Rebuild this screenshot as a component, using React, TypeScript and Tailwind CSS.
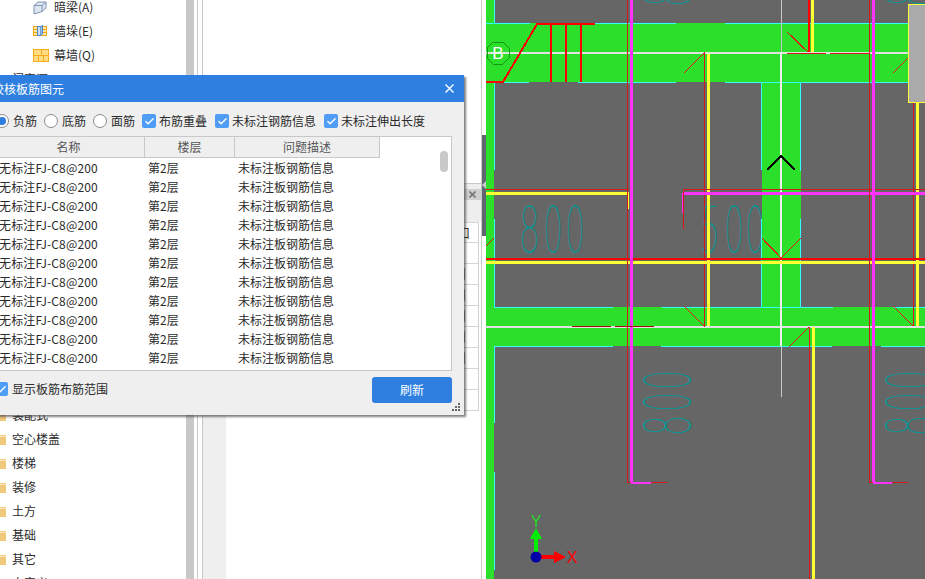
import { Check } from 'lucide-react'

const FONT = "font-['Noto_Sans_CJK_SC','Noto_Sans',sans-serif]"

type Seg = [number, number, number, number, string, number]

const GREEN = '#2bdf2b'
const CYAN = '#33ffff'
const RED = '#d81818'
const BRIGHT = '#ff0000'
const DARK = '#a80808'
const YEL = '#ffff33'
const MAG = '#ff33ff'
const WHITE = '#e2e2e2'
const TEAL = '#009a9a'

const cadLines: Seg[] = [
  // cyan edges
  [494, 0, 494, 23, CYAN, 1],
  [494, 83, 494, 170, CYAN, 1],
  [494, 219, 494, 307, CYAN, 1],
  [494, 347, 494, 423, CYAN, 1],
  [494, 472, 494, 570, CYAN, 1],
  [486, 23.5, 530, 23.5, CYAN, 1],
  [595, 23.5, 676, 23.5, CYAN, 1],
  [725, 23.5, 908, 23.5, CYAN, 1],
  [504, 82.5, 529, 82.5, CYAN, 1],
  [578, 82.5, 676, 82.5, CYAN, 1],
  [725, 82.5, 908, 82.5, CYAN, 1],
  [761.5, 82, 761.5, 170, CYAN, 1],
  [800.5, 82, 800.5, 171, CYAN, 1],
  [761.5, 219, 761.5, 307, CYAN, 1],
  [800.5, 219, 800.5, 307, CYAN, 1],
  [494, 307.5, 613, 307.5, CYAN, 1],
  [662, 307.5, 833, 307.5, CYAN, 1],
  [893, 307.5, 925, 307.5, CYAN, 1],
  [494, 346.5, 613, 346.5, CYAN, 1],
  [661, 346.5, 832, 346.5, CYAN, 1],
  [881, 346.5, 925, 346.5, CYAN, 1],
  // axis lines
  [486, 52.5, 908, 52.5, WHITE, 2],
  [486, 326.5, 925, 326.5, WHITE, 2],
  [781.5, 0, 781.5, 52, '#c8c8c8', 1],
  [781, 52, 781, 346, '#eeeeee', 2],
  [781.5, 346, 781.5, 397, '#c8c8c8', 1],
  // vertical rebar
  [708.5, 54, 708.5, 326, YEL, 3],
  [704.5, 52, 704.5, 327, RED, 1],
  [812.5, 0, 812.5, 52, YEL, 3],
  [808.5, 0, 808.5, 52, BRIGHT, 2],
  [813.5, 327, 813.5, 579, YEL, 3],
  [809.5, 327, 809.5, 579, RED, 1],
  [917.5, 102, 917.5, 326, YEL, 3],
  [913.5, 52, 913.5, 326, RED, 1],
  // horizontal rebar
  [486, 262.5, 925, 262.5, YEL, 3],
  [486, 259, 925, 259, BRIGHT, 2],
  [486, 193.5, 629, 193.5, YEL, 3],
  [486, 189.5, 629, 189.5, RED, 1],
  [628.5, 193, 628.5, 209, YEL, 1],
  [684, 193.5, 925, 193.5, MAG, 3],
  [683, 189.5, 925, 189.5, RED, 1],
  [682.5, 193, 682.5, 213, MAG, 2],
  [683.5, 189, 683.5, 229, RED, 1],
  [631, 0, 631, 482, MAG, 3],
  [627.5, 0, 627.5, 482, RED, 1],
  [627, 482.5, 667, 482.5, RED, 1],
  [631, 482.5, 651, 482.5, MAG, 2],
  [873, 0, 873, 482, MAG, 3],
  [869.5, 0, 869.5, 482, RED, 1],
  [869, 482.5, 908, 482.5, RED, 1],
  [873, 482.5, 892, 482.5, MAG, 2],
  // short spans on the axes
  [787, 53, 826, 53, RED, 1],
  [830, 53, 870, 53, RED, 1],
  [572, 326, 611, 326, DARK, 1],
  [615, 326, 654, 326, DARK, 1],
  // stair lines
  [551, 24, 551, 82, BRIGHT, 2],
  [566, 24, 566, 82, BRIGHT, 2],
  [581, 24, 581, 82, BRIGHT, 2],
]

const diagonals: [number, number, number, number][] = [
  [684, 73, 704, 53],
  [684, 306, 704, 326],
  [787, 32, 808, 52],
  [789, 347, 809, 327],
  [893, 73, 913, 53],
  [893, 306, 913, 326],
  [762, 238, 781, 258],
  [781, 258, 801, 238],
  [486, 246, 494, 238],
]

// dimension labels on the plan: [digit, offset along the baseline, length]
const LABEL_800: [string, number, number][] = [
  ['8', 0, 19],
  ['0', 25, 16],
  ['0', 47, 16],
]
const LABEL_500: [string, number, number][] = [
  ['5', 0, 19],
  ['0', 26, 16],
  ['0', 47, 16],
]

const Digits = ({
  x,
  y,
  rotate,
  digits,
}: {
  x: number
  y: number
  rotate?: boolean
  digits: [string, number, number][]
}) => (
  <g transform={`translate(${x} ${y})${rotate ? ' rotate(-90)' : ''}`}>
    {digits.map(([d, off, len], i) => (
      <text
        key={i}
        x={off}
        y={0}
        fontSize="65"
        fontWeight="100"
        textLength={len}
        lengthAdjust="spacingAndGlyphs"
        fill={TEAL}
        stroke={TEAL}
        strokeWidth="0.7"
        fontFamily="Lato, Roboto, sans-serif"
      >
        {d}
      </text>
    ))}
  </g>
)

const CadCanvas = () => (
  <svg viewBox="486 0 439 579" className="h-[579px] w-[439px] shrink-0 bg-[#666666]" shapeRendering="crispEdges">
    <rect x="486" y="0" width="8" height="579" fill={GREEN} />
    <rect x="486" y="23" width="422" height="59" fill={GREEN} />
    <rect x="762" y="82" width="39" height="225" fill={GREEN} />
    <rect x="486" y="307" width="439" height="39" fill={GREEN} />
    <Digits x={520} y={252} digits={LABEL_800} />
    <Digits x={700} y={252} digits={LABEL_500} />
    <Digits x={690} y={435} rotate digits={LABEL_800} />
    <Digits x={932} y={435} rotate digits={LABEL_800} />
    <Digits x={690} y={6} rotate digits={LABEL_800} />
    <Digits x={932} y={6} rotate digits={LABEL_800} />
    {cadLines.map(([x1, y1, x2, y2, stroke, w], i) => (
      <line key={i} x1={x1} y1={y1} x2={x2} y2={y2} stroke={stroke} strokeWidth={w} />
    ))}
    {diagonals.map(([x1, y1, x2, y2], i) => (
      <line key={i} x1={x1} y1={y1} x2={x2} y2={y2} stroke="#e81414" strokeWidth="1.2" />
    ))}
    <polyline points="486,82 503,82 537,24 595,24" fill="none" stroke={BRIGHT} strokeWidth="2" />
    <polyline points="767,170 781,156 795,170" fill="none" stroke="#000000" strokeWidth="2" />
    <rect x="908.5" y="4.5" width="20" height="98" fill="#aaaaaa" stroke={YEL} strokeWidth="1.5" />

    <polygon
      points="493,42 503,42 509,48 509,58 503,64 493,64 487,58 487,48"
      fill="none"
      stroke="#129a12"
      strokeWidth="1"
    />
    <text x="498" y="59" textAnchor="middle" fontSize="17" fill="#ffffff" fontFamily="Liberation Sans, sans-serif">
      B
    </text>

    {/* axis gizmo */}
    <rect x="534" y="538" width="4" height="15" fill="#00ee00" />
    <polygon points="536,528 542,539 530,539" fill="#00ee00" />
    <rect x="540" y="555" width="15" height="4" fill="#ff0000" />
    <polygon points="554,551 566,557 554,563" fill="#ff0000" />
    <circle cx="536" cy="557" r="5.5" fill="#0000a8" shapeRendering="auto" />
    <text x="536" y="527" textAnchor="middle" fontSize="16" fill="#22dd22" fontFamily="Liberation Sans, sans-serif">
      Y
    </text>
    <text x="572" y="563" textAnchor="middle" fontSize="16" fill="#ff0000" fontFamily="Liberation Sans, sans-serif">
      X
    </text>
  </svg>
)

const BeamIcon = () => (
  <svg width="14" height="15" viewBox="0 0 14 15" fill="none" className="shrink-0">
    <path d="M1 5.5 L5 2 H13 V8 L9 11.5 L1 14 Z" fill="#dfe6f0" stroke="#7f93b5" />
    <path d="M1 5.5 H9 V11.5 M9 5.5 L13 2" stroke="#7f93b5" />
  </svg>
)

const PierIcon = () => (
  <svg width="14" height="12" viewBox="0 0 14 12" className="shrink-0">
    <rect x="0.5" y="1.5" width="13" height="9" fill="#ffe9a8" stroke="#f0a818" />
    <path d="M0 4.5 H14 M0 7.5 H14" stroke="#f0a818" />
    <rect x="4.5" y="1.5" width="3" height="9" fill="#cfe0f5" stroke="#4f86c6" />
    <path d="M7.5 1.5 L9.5 0.5 V9 L7.5 10.5" fill="#9dbfe6" stroke="#4f86c6" />
  </svg>
)

const CurtainIcon = () => (
  <svg width="16" height="13" viewBox="0 0 16 13" className="shrink-0">
    <rect x="0.5" y="0.5" width="15" height="12" fill="#ffdc85" stroke="#f5ac17" />
    <path d="M0 6.5 H16 M8.5 0 V6 M5.5 7 V13 M10.5 7 V13" stroke="#f5ac17" />
  </svg>
)

const Folder = () => (
  <svg width="14" height="12" viewBox="0 0 14 12" className="ml-[-8px] shrink-0">
    <path d="M0 0 H6 L7 2 H14 V12 H0 Z" fill="#f0c87c" />
    <rect x="0" y="3" width="14" height="1" fill="#fbe7bd" />
  </svg>
)

const TreeChild = ({ icon, label }: { icon: React.ReactNode; label: string }) => (
  <div className="flex h-6 items-center pl-[33px]">
    <div className="flex w-[21px] items-center">{icon}</div>
    <span>{label}</span>
  </div>
)

const TreeFolder = ({ label }: { label: string }) => (
  <div className="flex h-6 items-center gap-[6px]">
    <Folder />
    <span>{label}</span>
  </div>
)

const Sidebar = () => (
  <div className="mt-[-5px] w-[186px] shrink-0 overflow-hidden text-[12px] leading-6 text-[#2b2b2b]">
    <TreeChild icon={<BeamIcon />} label="暗梁(A)" />
    <TreeChild icon={<PierIcon />} label="墙垛(E)" />
    <TreeChild icon={<CurtainIcon />} label="幕墙(Q)" />
    <TreeFolder label="门窗洞" />
    <div className="h-[312px]" />
    {['装配式', '空心楼盖', '楼梯', '装修', '土方', '基础', '其它', '自定义'].map((name) => (
      <TreeFolder key={name} label={name} />
    ))}
  </div>
)

const Radio = ({ on, className }: { on?: boolean; className?: string }) => (
  <span
    className={`flex size-[14px] shrink-0 items-center justify-center rounded-full border border-[#8c8c8c] bg-white ${className ?? ''}`}
  >
    {on && <span className="size-[8px] rounded-full bg-[#2e7fe0]" />}
  </span>
)

const Checkbox = ({ className }: { className?: string }) => (
  <span
    className={`flex size-[14px] shrink-0 items-center justify-center rounded-[2px] bg-[#4f9df5] ${className ?? ''}`}
  >
    <Check size={11} strokeWidth={3} className="text-white" />
  </span>
)

const ROWS = Array.from({ length: 11 }, (_, i) => i)

const CheckDialog = () => (
  <div
    className={`absolute left-[-18px] top-[75px] flex h-[340px] w-[482px] flex-col bg-[#efefef] text-[12px] text-[#2b2b2b] shadow-[2px_2px_2px_rgba(60,60,60,0.65)] ${FONT}`}
  >
    <div className="flex h-[27px] shrink-0 items-center justify-between bg-[#2e7fe0] pl-[10px] pr-[10px] text-white">
      <span className="text-[12px]">校核板筋图元</span>
      <svg width="9" height="9" viewBox="0 0 9 9" stroke="#ffffff" strokeWidth="1.4">
        <path d="M0.5 0.5 L8.5 8.5 M8.5 0.5 L0.5 8.5" />
      </svg>
    </div>

    <div className="flex h-[34px] shrink-0 items-center pl-[13px] pt-[4px]">
      <Radio on />
      <span className="ml-1">负筋</span>
      <Radio className="ml-[7px]" />
      <span className="ml-1">底筋</span>
      <Radio className="ml-[7px]" />
      <span className="ml-1">面筋</span>
      <Checkbox className="ml-[7px]" />
      <span className="ml-[3px]">布筋重叠</span>
      <Checkbox className="ml-2" />
      <span className="ml-[3px]">未标注钢筋信息</span>
      <Checkbox className="ml-2" />
      <span className="ml-[3px]">未标注伸出长度</span>
    </div>

    <div className="relative ml-[10px] mr-[12px] h-[235px] shrink-0 overflow-hidden border border-[#c8c8c8] bg-white">
      <div className="flex h-[21px] w-[387px] border-b border-[#c8c8c8] bg-[#efefef] text-[#555555]">
        <div className="flex w-[152px] items-center justify-center border-r border-[#c8c8c8]">名称</div>
        <div className="flex w-[90px] items-center justify-center border-r border-[#c8c8c8]">楼层</div>
        <div className="flex w-[145px] items-center justify-center border-r border-[#c8c8c8]">问题描述</div>
      </div>
      {ROWS.map((i) => (
        <div key={i} className="flex h-[19px] items-center">
          <div className="w-[152px] pl-[6px] tracking-[0.16px]">无标注FJ-C8@200</div>
          <div className="w-[90px] pl-[3px]">第2层</div>
          <div className="pl-[3px]">未标注板钢筋信息</div>
        </div>
      ))}
      <div className="absolute right-[3px] top-[14px] h-[21px] w-2 rounded-full bg-[#c8c8c8]" />
    </div>

    <div className="flex flex-1 items-start justify-between pl-[12px] pr-[12px] pt-[6px]">
      <div className="flex h-6 items-center gap-1">
        <Checkbox />
        <span>显示板筋布筋范围</span>
      </div>
      <button type="button" className="h-[26px] w-[80px] rounded-[3px] bg-[#2e7fe0] text-[12px] text-white">
        刷新
      </button>
    </div>

    <svg width="8" height="8" viewBox="0 0 8 8" fill="#666666" className="absolute bottom-[4px] right-[4px]">
      <rect x="6" y="0" width="2" height="2" />
      <rect x="3" y="3" width="2" height="2" />
      <rect x="6" y="3" width="2" height="2" />
      <rect x="0" y="6" width="2" height="2" />
      <rect x="3" y="6" width="2" height="2" />
      <rect x="6" y="6" width="2" height="2" />
    </svg>
  </div>
)

const PropertyPanel = () => (
  <div className="flex min-w-0 flex-1 flex-col border-r border-[#c8c8c8] bg-white">
    <div className="h-[183px] shrink-0" />
    <div className="flex flex-1 border-t border-[#c8c8c8]">
      <div className="w-[23px] shrink-0 bg-[#efefef]" />
      <div className="flex min-w-0 flex-1 flex-col">
        <div className="h-[38px] shrink-0 bg-[#eeeeee] pt-[5px]">
          <div className="flex h-[11px] items-center justify-end bg-[#cfcfcf] pr-[5px]">
            <svg width="7" height="7" viewBox="0 0 7 7" stroke="#777777" strokeWidth="1.6">
              <path d="M0.5 0.5 L6.5 6.5 M6.5 0.5 L0.5 6.5" />
            </svg>
          </div>
        </div>
        <div className="mr-[2px] border-r border-[#d4d4d4]">
          <div className="flex h-[21px] items-center justify-end border-y border-[#d4d4d4] pr-[8px] text-[12px] text-[#2b2b2b]">
            口
          </div>
          {Array.from({ length: 8 }, (_, i) => (
            <div key={i} className="flex h-[21px] items-center justify-end border-b border-[#d4d4d4] pr-[13px]">
              {i >= 1 && i <= 5 && <span className="h-[14px] w-2 rounded-r-[3px] border-r border-[#777777]" />}
            </div>
          ))}
        </div>
      </div>
    </div>
  </div>
)

export default function App() {
  return (
    <div className={`relative flex h-[579px] w-[925px] overflow-hidden bg-white ${FONT}`}>
      <Sidebar />
      <div className="w-2 shrink-0 bg-[#c8c8c8]" />
      <div className="ml-[3px] w-px shrink-0 bg-[#c8c8c8]" />
      <div className="ml-1 w-px shrink-0 bg-[#c8c8c8]" />
      <PropertyPanel />
      <div className="w-1 shrink-0">
        <div className="mt-[135px] flex h-[101px] items-center bg-[#5f6670]">
          <span className="mb-[2px] border-y-[4px] border-r-[4px] border-y-transparent border-r-[#c8c8c8]" />
        </div>
      </div>
      <CadCanvas />
      <CheckDialog />
    </div>
  )
}
